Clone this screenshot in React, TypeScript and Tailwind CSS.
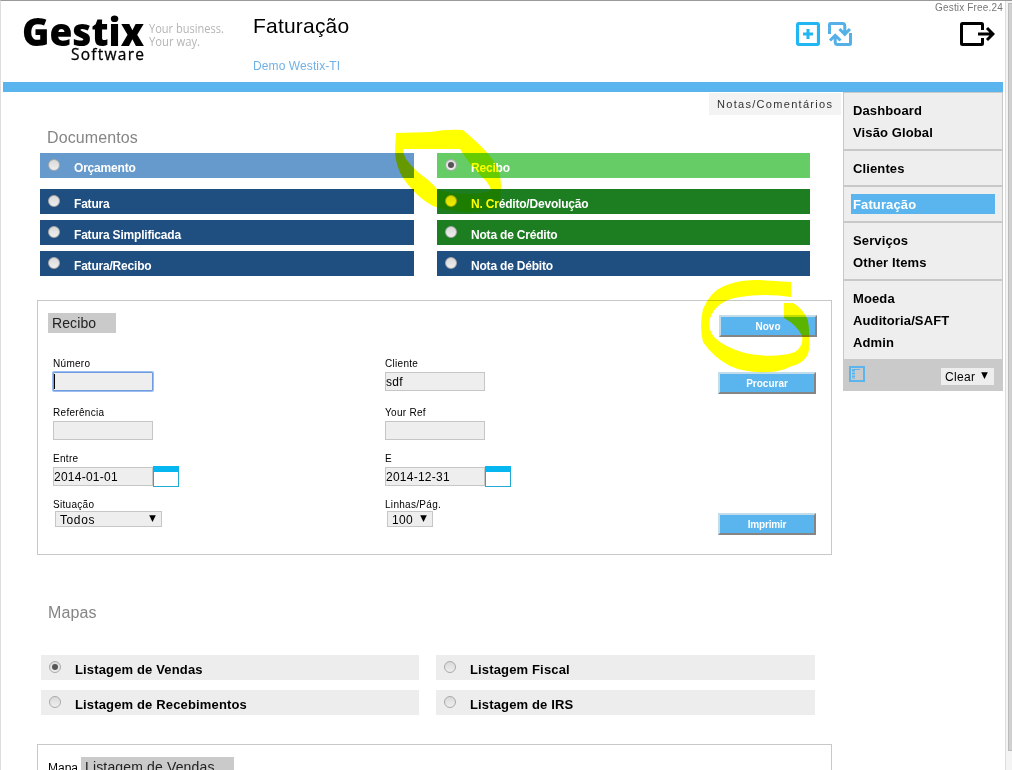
import React from "react";

type RadioProps = { on?: boolean };

function Radio({ on }: RadioProps) {
  return (
    <span className="mt-[6px] ml-[8px] flex size-[12px] shrink-0 items-center justify-center rounded-full border border-[#a9a9a9] bg-linear-to-b from-[#dadada] to-[#eeeeee]">
      {on && <span className="size-[6px] rounded-full bg-[#555]" />}
    </span>
  );
}

type OptionProps = { label: string; bar: string; text: string; on?: boolean };

function Option({ label, bar, text, on }: OptionProps) {
  return (
    <div className={`flex h-[25px] ${bar}`}>
      <Radio on={on} />
      <span className={`ml-[14px] font-bold whitespace-nowrap ${text}`}>{label}</span>
    </div>
  );
}

const docText = "text-[12px] leading-[31px] text-white tracking-[-0.2px]";
const mapText = "text-[13px] leading-[29px] text-black tracking-[0.15px]";
const navy = "bg-[#1f4e80]";
const green = "bg-[#1d7d21]";

const documents: [OptionProps, OptionProps][] = [
  [
    { label: "Fatura", bar: navy, text: docText },
    { label: "N. Crédito/Devolução", bar: green, text: docText },
  ],
  [
    { label: "Fatura Simplificada", bar: navy, text: docText },
    { label: "Nota de Crédito", bar: green, text: docText },
  ],
  [
    { label: "Fatura/Recibo", bar: navy, text: docText },
    { label: "Nota de Débito", bar: navy, text: docText },
  ],
];

function Field({ label, children }: { label: string; children: React.ReactNode }) {
  return (
    <div className="w-[332px] shrink-0">
      <div className="h-[15px] text-[10px] leading-[13px] tracking-[0.3px] text-black">{label}</div>
      {children}
    </div>
  );
}

function Box({ value, focus, date }: { value?: string; focus?: boolean; date?: boolean }) {
  return (
    <div className="flex">
      <div
        className={`flex h-[19px] w-[100px] items-center border text-[12px] tracking-[0.25px] ${
          focus ? "rounded-[1px] border-[#6f9be0] bg-[#eee] shadow-[0_0_0_1px_#9dbdf0]" : "border-[#c6c6c6] bg-[#eee]"
        }`}
      >
        {focus && <span className="h-[15px] w-px bg-black" />}
        {value}
      </div>
      {date && (
        <div className="-mt-px h-[21px] w-[26px] border-x border-t-[6px] border-b border-x-[#22a9d6] border-t-[#06b6f0] border-b-[#22a9d6] bg-white" />
      )}
    </div>
  );
}

function Button({ label, className = "" }: { label: string; className?: string }) {
  return (
    <div
      className={`flex h-[22px] w-[98px] items-center justify-center border-2 border-t-[#c3dcea] border-r-[#858585] border-b-[#858585] border-l-[#c3dcea] bg-[#5ab4ee] text-[10px] font-bold text-white ${className}`}
    >
      {label}
    </div>
  );
}

const Arrow = () => (
  <svg className="-mt-[2px]" width="7" height="7" viewBox="0 0 7 7">
    <path d="M0.2 0.3H6.8L3.5 7Z" fill="#000" />
  </svg>
);

const menu = [["Dashboard", "Visão Global"], ["Clientes"], ["Faturação"], ["Serviços", "Other Items"], ["Moeda", "Auditoria/SAFT", "Admin"]];

function Sidebar() {
  return (
    <aside className="w-[160px] shrink-0">
      <div className="border-x border-t border-[#c8c8c8]">
        {menu.map((group, i) => (
          <div key={i} className={`bg-[#eee] px-[7px] py-[6px] ${i < menu.length - 1 ? "border-b-2 border-[#c8c8c8]" : ""}`}>
            {group.map((item) => (
              <div
                key={item}
                className={`pl-[2px] text-[13px] font-bold tracking-[0.12px] ${
                  item === "Faturação" ? "my-px h-[20px] bg-[#5ab4ee] leading-[21px] text-white" : "h-[22px] leading-[23px] text-black"
                }`}
              >
                {item}
              </div>
            ))}
          </div>
        ))}
      </div>
      <div className="flex h-[32px] items-start justify-between bg-[#cacaca] pr-[9px] pl-[6px]">
        <svg className="mt-[7px]" width="16" height="16" viewBox="0 0 16 16" fill="none" stroke="#5ab4ee">
          <rect x="1" y="1" width="14" height="14" strokeWidth="2" />
          <path d="M4.5 3.5V13" strokeWidth="3" strokeDasharray="2 1" />
          <path d="M3 3.5H11" strokeWidth="1" />
        </svg>
        <div className="mt-[9px] flex h-[17px] w-[53px] items-center justify-between bg-[#eee] pr-[6px] pl-[4px] text-[12px] tracking-[0.3px]">
          Clear
          <Arrow />
        </div>
      </div>
    </aside>
  );
}

function Header() {
  return (
    <header className="flex h-[81px] pl-[20px]">
      <svg width="230" height="81" viewBox="23 1 230 81" fontFamily="'Open Sans', sans-serif">
        <text x="22" y="45.5" fontSize="39" fontWeight="800" textLength="122" lengthAdjust="spacingAndGlyphs">
          Gestix
        </text>
        <text x="71" y="60" fontSize="15.5" textLength="73" stroke="#000" strokeWidth="0.3">
          Software
        </text>
        <g fontSize="12.5" fill="#b5b5b5">
          <text x="149" y="32.5" textLength="75" lengthAdjust="spacingAndGlyphs">
            Your business.
          </text>
          <text x="149" y="46" textLength="51" lengthAdjust="spacingAndGlyphs">
            Your way.
          </text>
        </g>
      </svg>
      <div className="w-[543px] pt-[10px]">
        <h1 className="h-[30px] text-[21px] leading-[30px] tracking-[0.2px]">Faturação</h1>
        <p className="mt-[16px] text-[12px] leading-[18px] tracking-[0.1px] text-[#72b1e4]">Demo Westix-TI</p>
      </div>
      <svg className="mt-[21px]" width="24" height="24" viewBox="0 0 24 24" fill="none" stroke="#22b6f3">
        <rect x="1.5" y="1.5" width="21" height="21" rx="1.5" strokeWidth="3.2" />
        <path d="M12 7V17M7 12H17" strokeWidth="3" />
      </svg>
      <svg className="mt-[21px] ml-[8px]" width="24" height="24" viewBox="0 0 24 24" fill="none" stroke="#55b0e8" strokeWidth="3">
        <path d="M1.5 12V2.5Q1.5 1.5 2.5 1.5H14.5Q16.8 1.5 16.8 4V12M11.5 7L16.8 12.3L22 7" />
        <path d="M22.5 11V21.5Q22.5 22.5 21.5 22.5H9.5Q7.2 22.5 7.2 20V13M2 18.5L7.2 13.3L12.5 18.5" />
      </svg>
      <div className="flex flex-1 flex-col items-end">
        <div className="h-[14px] text-[10px] leading-[14px] tracking-[0.17px] whitespace-nowrap text-[#777]">Gestix Free.24</div>
        <svg className="mt-[7px] mr-[8px]" width="35" height="24" viewBox="0 0 35 24" fill="none" stroke="#000" strokeWidth="3">
          <path d="M22.5 8V2.5Q22.5 1.5 21.5 1.5H2.5Q1.5 1.5 1.5 2.5V21.5Q1.5 22.5 2.5 22.5H21.5Q22.5 22.5 22.5 21.5V16" />
          <path d="M18 12H33M27 6L33 12L27 18" strokeWidth="3" />
        </svg>
      </div>
    </header>
  );
}

export default function App() {
  return (
    <div className="relative flex h-[770px] w-[1012px] overflow-hidden border-t border-l border-t-[#999] border-l-[#ddd] bg-white font-['Liberation_Sans',Arial,sans-serif] text-black">
      <div className="ml-[2px] w-[1000px] shrink-0">
        <Header />
        <div className="h-[10px] bg-[#5ab4ee]" />
        <div className="flex">
          <main className="w-[840px] shrink-0">
            <div className="flex h-[23px] justify-end pr-[2px]">
              <div className="mt-px h-[22px] w-[132px] bg-[#f3f3f3] pl-[8px] text-[11px] leading-[22px] tracking-[1.3px] whitespace-nowrap text-[#333]">
                Notas/Comentários
              </div>
            </div>
            <h2 className="mt-[11px] ml-[44px] h-[24px] text-[16px] leading-[24px] tracking-[0.1px] text-[#858585]">Documentos</h2>
            <div className="mt-[3px] ml-[37px] grid w-[770px] grid-cols-[374px_373px] justify-between">
              <Option label="Orçamento" bar="bg-[#6699cc]" text={docText} />
              <Option label="Recibo" bar="bg-[#66cc66]" text={docText} on />
            </div>
            <div className="mt-[11px] ml-[37px] grid w-[770px] grid-cols-[374px_373px] justify-between gap-y-[6px]">
              {documents.flat().map((d) => (
                <Option key={d.label} {...d} />
              ))}
            </div>

            <section className="mt-[24px] ml-[34px] flex h-[255px] w-[795px] border border-[#c8c8c8]">
              <div className="w-[680px] shrink-0 pt-[12px]">
                <div className="ml-[10px] h-[20px] w-[68px] bg-[#cacaca] pl-[4px] text-[14px] leading-[20px] tracking-[0.1px] text-[#222]">Recibo</div>
                <div className="mt-[24px] ml-[15px] flex h-[49px]">
                  <Field label="Número">
                    <Box focus />
                  </Field>
                  <Field label="Cliente">
                    <Box value="sdf" />
                  </Field>
                </div>
                <div className="ml-[15px] flex h-[46px]">
                  <Field label="Referência">
                    <Box />
                  </Field>
                  <Field label="Your Ref">
                    <Box />
                  </Field>
                </div>
                <div className="ml-[15px] flex h-[46px]">
                  <Field label="Entre">
                    <Box value="2014-01-01" date />
                  </Field>
                  <Field label="E">
                    <Box value="2014-12-31" date />
                  </Field>
                </div>
                <div className="ml-[15px] flex">
                  <Field label="Situação">
                    <div className="-mt-[2px] ml-[2px] flex h-[16px] w-[107px] items-center justify-between border border-[#c6c6c6] bg-[#eee] pr-[5px] pl-[4px] text-[12px] leading-[18px] tracking-[0.6px]">
                      <span className="pt-[2px]">Todos</span>
                      <Arrow />
                    </div>
                  </Field>
                  <Field label="Linhas/Pág.">
                    <div className="-mt-[2px] ml-[2px] flex h-[16px] w-[46px] items-center justify-between border border-[#c6c6c6] bg-[#eee] pr-[5px] pl-[4px] text-[12px] leading-[18px] tracking-[0.3px]">
                      <span className="pt-[2px]">100</span>
                      <Arrow />
                    </div>
                  </Field>
                </div>
              </div>
              <div className="pt-[14px]">
                <Button label="Novo" className="ml-px" />
                <Button label="Procurar" className="mt-[35px]" />
                <Button label="Imprimir" className="mt-[119px] tracking-[-0.2px]" />
              </div>
            </section>

            <h2 className="mt-[46px] ml-[45px] h-[24px] text-[16px] leading-[24px] tracking-[0.1px] text-[#858585]">Mapas</h2>
            <div className="mt-[30px] ml-[38px] grid w-[774px] grid-cols-[378px_379px] justify-between gap-y-[10px]">
              <Option label="Listagem de Vendas" bar="bg-[#ededed]" text={mapText} on />
              <Option label="Listagem Fiscal" bar="bg-[#ededed]" text={mapText} />
              <Option label="Listagem de Recebimentos" bar="bg-[#ededed]" text={mapText} />
              <Option label="Listagem de IRS" bar="bg-[#ededed]" text={mapText} />
            </div>
            <section className="mt-[29px] ml-[34px] flex h-[60px] w-[795px] border border-[#c8c8c8] pt-[12px] pl-[10px]">
              <span className="w-[33px] text-[12px] leading-[22px]">Mapa</span>
              <span className="h-[20px] w-[153px] bg-[#cacaca] pl-[4px] text-[14px] leading-[20px] tracking-[0.15px] text-[#222]">Listagem de Vendas</span>
            </section>
          </main>
          <Sidebar />
        </div>
      </div>
      <div className="ml-[2px] flex flex-1 border-l border-[#ddd] bg-[#f4f4f4] pt-[2px]">
        <div className="ml-[2px] h-[748px] flex-1 rounded-l-[1px] border border-r-0 border-[#bbb] bg-[#d0d0d0]" />
      </div>
      <svg className="pointer-events-none absolute -top-px -left-px mix-blend-multiply" width="1012" height="770" viewBox="0 0 1012 770" fill="#ffff00">
        <path
          fillRule="evenodd"
          d="M396 133L431 132Q446 129 463 130L470 136Q485 149 493 160Q501 172 501 186L500 207Q480 213 462 212Q445 210 433 206Q420 199 410 187Q402 178 399 170Q395 160 395 150ZM403 149Q403 154 406 159Q415 171 427 179Q434 185 438 190L452 193Q475 195 491 191Q490 184 482 177Q469 164 460 149Z"
        />
        <path d="M791 282V297Q765 293 740 297Q718 300 711 316Q706 326 714 337Q724 347 745 353Q775 359 795 352Q804 346 802 336Q797 325 784 318V303H793Q802 308 807 318Q810 325 809 350Q807 362 792 366Q780 372 768 372Q745 373 730 366Q713 357 703 342Q699 325 703 309Q710 292 724 286Q740 279 760 280Z" />
      </svg>
    </div>
  );
}
